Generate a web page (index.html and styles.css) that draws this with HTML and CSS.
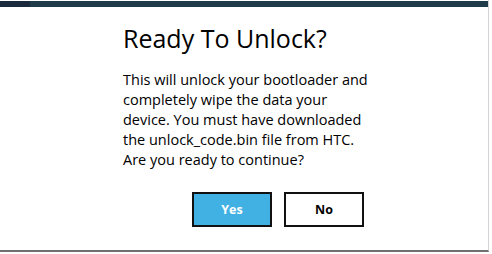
FILE: index.html
```html
<!DOCTYPE html>
<html>
<head>
<meta charset="utf-8">
<link rel="stylesheet" href="styles.css">
</head>
<body>
<div class="window">
  <div class="topbar"><div class="topbar-left"></div></div>
  <div class="content">
    <h1 class="title">Ready To Unlock?</h1>
    <p class="message">This will unlock your bootloader and<br>completely wipe the data your<br>device. You must have downloaded<br>the unlock_code.bin file from HTC.<br>Are you ready to continue?</p>
    <div class="actions">
      <button class="btn btn-yes">Yes</button>
      <button class="btn btn-no">No</button>
    </div>
  </div>
</div>
</body>
</html>
```
FILE: styles.css
```css
html, body {
  margin: 0;
  padding: 0;
  background: #ffffff;
}
.window {
  width: 489px;
  height: 252px;
  box-sizing: border-box;
  border-right: 1px solid #d4d4d4;
  border-bottom: 2px solid #707070;
  padding-top: 1px;
  font-family: "Open Sans", "Noto Sans", sans-serif;
  color: #000;
}
.topbar {
  height: 6px;
  background: #1f3b4a;
  display: flex;
}
.topbar-left {
  width: 30px;
  background: #1b2a3d;
}
.content {
  padding-left: 123px;
}
.title {
  margin: 15px 0 0 0;
  font-size: 25px;
  font-weight: 400;
  line-height: 32px;
}
.message {
  margin: 16px 0 0 0;
  font-size: 14.5px;
  line-height: 20px;
}
.actions {
  display: flex;
  gap: 12px;
  margin-top: 22px;
  padding-left: 69px;
}
.btn {
  width: 80px;
  height: 35px;
  box-sizing: border-box;
  border: 2px solid #111;
  font-family: "Open Sans", sans-serif;
  font-weight: 700;
  font-size: 12.5px;
  padding: 0;
}
.btn-yes {
  background: #41b0e3;
  color: #fff;
}
.btn-no {
  background: #fff;
  color: #000;
}
```
